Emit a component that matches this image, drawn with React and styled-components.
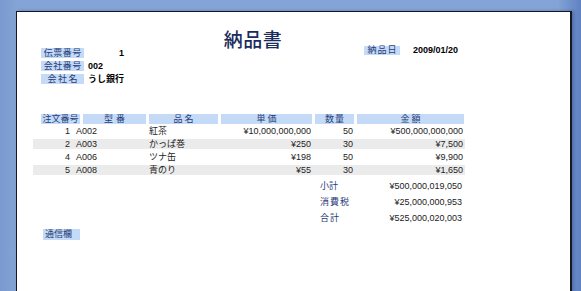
import React from "react";
import styled, { createGlobalStyle } from "styled-components";

const GlobalStyle = createGlobalStyle`
  html, body {
    margin: 0;
    padding: 0;
    height: 100%;
    overflow: hidden;
  }
  body {
    background: linear-gradient(to right, #7a9ad0 0%, #84a3d6 3%, #84a3d6 96%, #5f82c0 100%);
    font-family: "Liberation Sans", "Noto Sans CJK JP", sans-serif;
  }
`;

const NAVY = "#1f3d7a";
const LABEL_BG = "#c4daf6";

const rows = [
  { no: 1, code: "A002", name: "紅茶", price: "¥10,000,000,000", qty: 50, amount: "¥500,000,000,000" },
  { no: 2, code: "A003", name: "かっぱ巻", price: "¥250", qty: 30, amount: "¥7,500" },
  { no: 4, code: "A006", name: "ツナ缶", price: "¥198", qty: 50, amount: "¥9,900" },
  { no: 5, code: "A008", name: "青のり", price: "¥55", qty: 30, amount: "¥1,650" },
];

const headers = [
  { text: "注文番号", width: 39, spacing: 0 },
  { text: "型番", width: 63, spacing: 3 },
  { text: "品名", width: 69, spacing: 2 },
  { text: "単価", width: 91, spacing: 2 },
  { text: "数量", width: 39, spacing: 1 },
  { text: "金額", width: 107, spacing: 2 },
];

const totals = [
  { label: "小計", value: "¥500,000,019,050", spacing: 0 },
  { label: "消費税", value: "¥25,000,000,953", spacing: 1 },
  { label: "合計", value: "¥525,000,020,003", spacing: 1 },
];

function App() {
  return (
    <>
      <GlobalStyle />
      <Sheet>
        <Content>
          <Title>納品書</Title>
          <MetaRow>
            <InfoList>
              <InfoRow>
                <Label $width={43} $spacing={0.5}>伝票番号</Label>
                <Value $width={36} $align="right">1</Value>
              </InfoRow>
              <InfoRow>
                <Label $width={43} $spacing={0.5}>会社番号</Label>
                <Value>002</Value>
              </InfoRow>
              <InfoRow>
                <Label $width={43} $spacing={1.5}>会社名</Label>
                <Value>うし銀行</Value>
              </InfoRow>
            </InfoList>
            <DateField>
              <Label $width={36} $spacing={1} $height={9}>納品日</Label>
              <Value>2009/01/20</Value>
            </DateField>
          </MetaRow>

          <HeaderRow>
            {headers.map((h) => (
              <HeaderCell key={h.text} $width={h.width} $spacing={h.spacing}>
                {h.text}
              </HeaderCell>
            ))}
          </HeaderRow>
          <Body>
            {rows.map((r, i) => (
              <DataRow key={r.no} $shaded={i % 2 === 1}>
                <Cell $align="right" $pr={3}>{r.no}</Cell>
                <Cell $pl={3}>{r.code}</Cell>
                <Cell>{r.name}</Cell>
                <Cell $align="right">{r.price}</Cell>
                <Cell $align="right">{r.qty}</Cell>
                <Cell $align="right" $pr={2}>{r.amount}</Cell>
              </DataRow>
            ))}
          </Body>

          <Totals>
            {totals.map((t) => (
              <TotalRow key={t.label}>
                <TotalLabel $spacing={t.spacing}>{t.label}</TotalLabel>
                <span>{t.value}</span>
              </TotalRow>
            ))}
          </Totals>

          <NoteLabel>通信欄</NoteLabel>
        </Content>
      </Sheet>
    </>
  );
}

const Sheet = styled.div`
  margin: 11px 0 0 16px;
  width: 553px;
  height: 290px;
  background: #fff;
  border-top: 1px solid #141822;
  border-left: 1px solid #141822;
  border-right: 2px solid #141822;
  box-shadow: 2px 0 3px rgba(30, 50, 100, 0.35);
`;

const Content = styled.div`
  width: 432px;
  padding: 19px 0 0 16px;
  font-size: 9px;
  line-height: 10px;
  color: #222;
`;

const Title = styled.h1`
  margin: 0;
  padding-left: 8px;
  text-align: center;
  font-family: "Noto Sans CJK JP", sans-serif;
  font-size: 19px;
  font-weight: 500;
  line-height: 16px;
  letter-spacing: 0.5px;
  color: #1b2d5c;
`;

const MetaRow = styled.div`
  display: flex;
  align-items: flex-start;
  margin-top: -2px;
  padding-left: 8px;
`;

const InfoList = styled.div`
  display: flex;
  flex-direction: column;
  gap: 3px;
  padding-top: 3px;
`;

const InfoRow = styled.div`
  display: flex;
  align-items: center;
  gap: 4px;
`;

const Label = styled.span`
  display: block;
  width: ${(p) => p.$width}px;
  height: ${(p) => p.$height || 10}px;
  line-height: ${(p) => p.$height || 10}px;
  background: ${LABEL_BG};
  color: ${NAVY};
  text-align: center;
  letter-spacing: ${(p) => p.$spacing}px;
  text-indent: ${(p) => p.$spacing}px;
  white-space: nowrap;
`;

const Value = styled.span`
  display: block;
  width: ${(p) => (p.$width ? `${p.$width}px` : "auto")};
  text-align: ${(p) => p.$align || "left"};
  font-weight: bold;
  color: #000;
  white-space: nowrap;
`;

const DateField = styled.div`
  display: flex;
  align-items: center;
  gap: 13px;
  margin-left: auto;
  margin-right: 7px;
`;

const HeaderRow = styled.div`
  display: flex;
  gap: 3px;
  margin-top: 30px;
  padding-left: 8px;
`;

const HeaderCell = styled.div`
  width: ${(p) => p.$width}px;
  height: 10px;
  line-height: 10px;
  background: ${LABEL_BG};
  color: ${NAVY};
  text-align: center;
  letter-spacing: ${(p) => p.$spacing}px;
  text-indent: ${(p) => p.$spacing}px;
  white-space: nowrap;
`;

const Body = styled.div`
  display: flex;
  flex-direction: column;
  gap: 3px;
  margin-top: 2px;
`;

const DataRow = styled.div`
  display: grid;
  grid-template-columns: 40px 76px 71px 91px 42px 112px;
  height: 10px;
  background: ${(p) => (p.$shaded ? "#ebebeb" : "transparent")};
`;

const Cell = styled.div`
  text-align: ${(p) => p.$align || "left"};
  padding-left: ${(p) => p.$pl || 0}px;
  padding-right: ${(p) => p.$pr || 0}px;
  white-space: nowrap;
`;

const Totals = styled.div`
  display: flex;
  flex-direction: column;
  margin-top: 3px;
  padding: 0 3px 0 287px;
`;

const TotalRow = styled.div`
  display: flex;
  justify-content: space-between;
  line-height: 16px;
`;

const TotalLabel = styled.span`
  color: ${NAVY};
  letter-spacing: ${(p) => p.$spacing}px;
`;

const NoteLabel = styled.div`
  width: 37px;
  height: 11px;
  line-height: 11px;
  margin: 3px 0 0 10px;
  padding-left: 2px;
  box-sizing: border-box;
  background: ${LABEL_BG};
  color: ${NAVY};
`;

export default App;
